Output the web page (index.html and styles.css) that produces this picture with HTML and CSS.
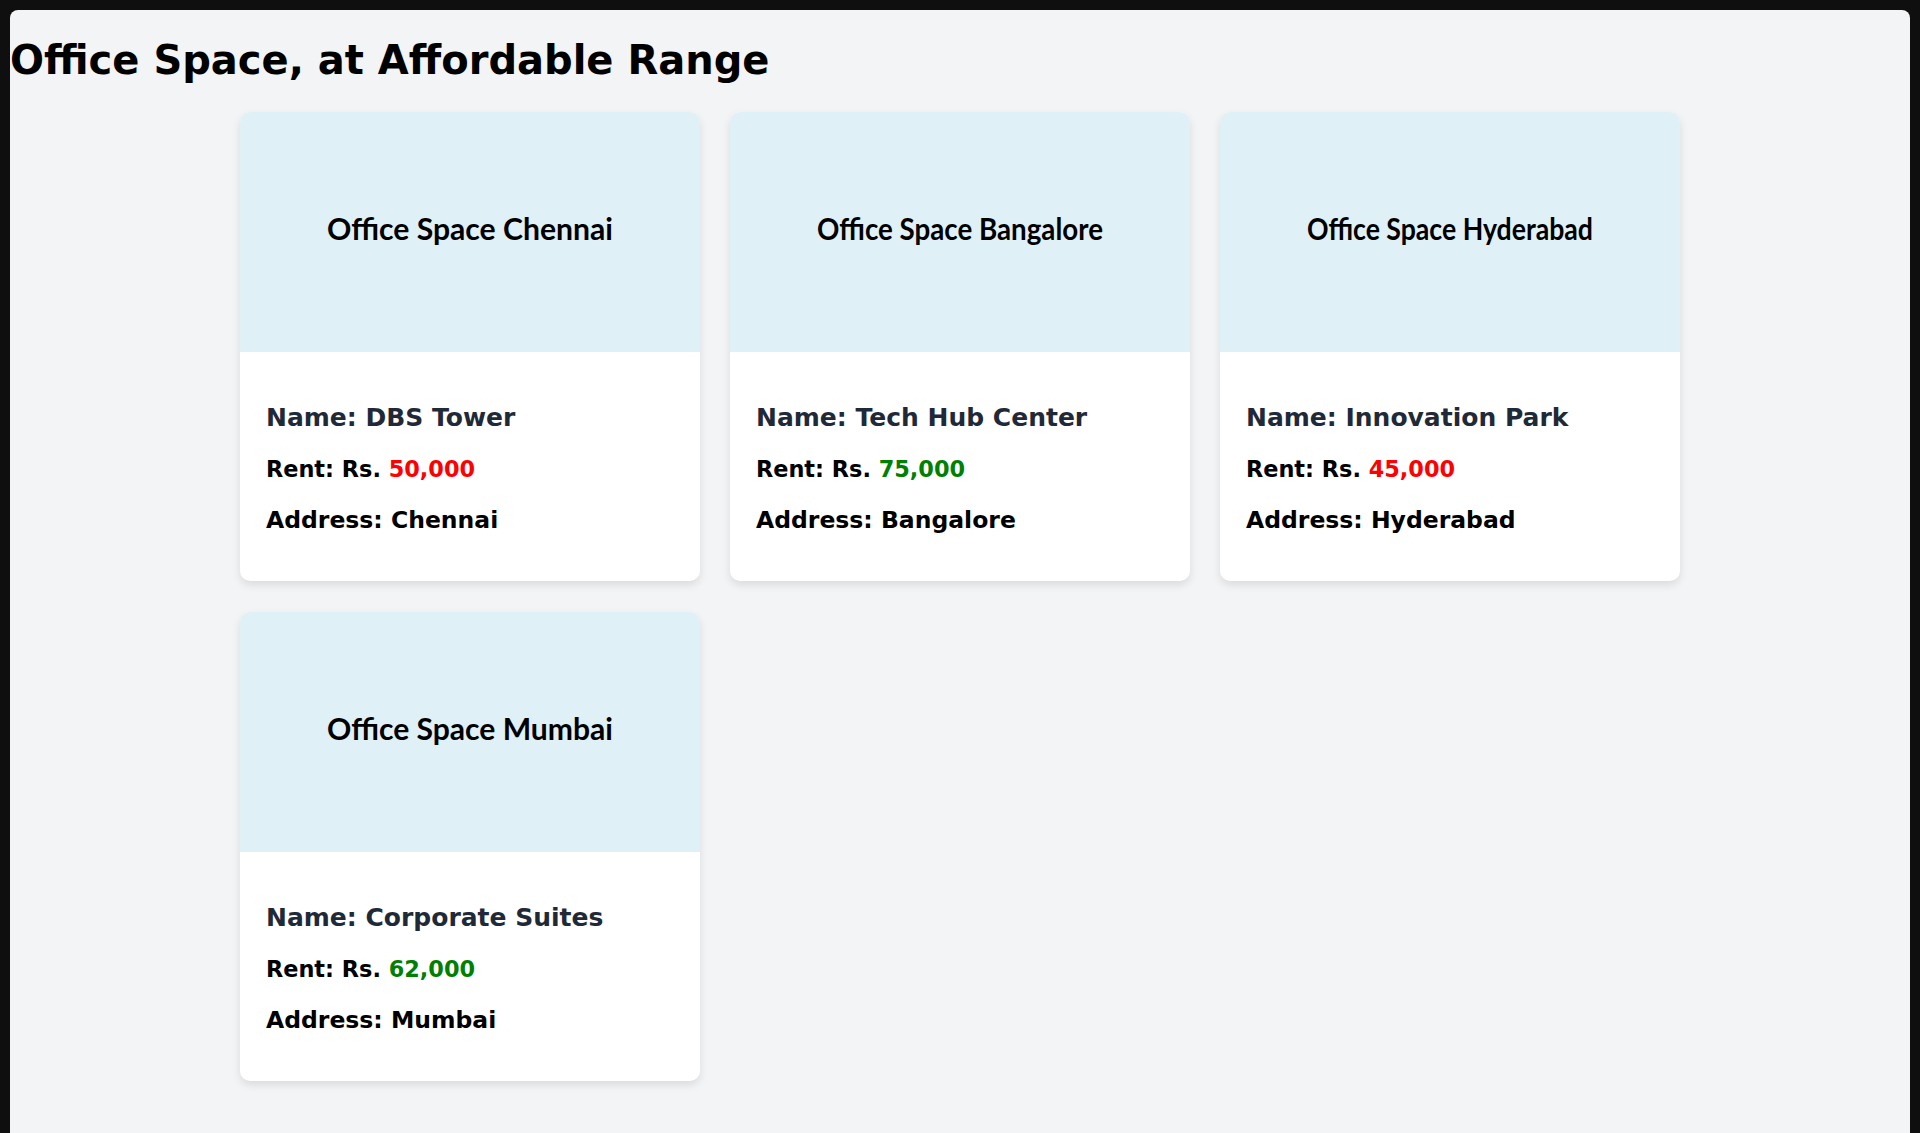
FILE: index.html
```
<!DOCTYPE html>
<html lang="en">
<head>
<meta charset="utf-8">
<title>Office Space</title>
<link rel="stylesheet" href="styles.css">
</head>
<body>
<div class="app">
  <h1 class="title">Office Space, at Affordable Range</h1>
  <div class="grid">
    <div class="card">
      <svg class="card-img" width="460" height="240" viewBox="0 0 460 240"><rect width="460" height="240" class="img-bg"/><text x="230" y="128" text-anchor="middle" textLength="286" lengthAdjust="spacingAndGlyphs" class="img-text">Office Space Chennai</text></svg>
      <div class="card-body">
        <h2 class="name">Name: DBS Tower</h2>
        <p class="rent">Rent: Rs. <span class="high">50,000</span></p>
        <p class="address">Address: Chennai</p>
      </div>
    </div>
    <div class="card">
      <svg class="card-img" width="460" height="240" viewBox="0 0 460 240"><rect width="460" height="240" class="img-bg"/><text x="230" y="128" text-anchor="middle" textLength="286" lengthAdjust="spacingAndGlyphs" class="img-text">Office Space Bangalore</text></svg>
      <div class="card-body">
        <h2 class="name">Name: Tech Hub Center</h2>
        <p class="rent">Rent: Rs. <span class="low">75,000</span></p>
        <p class="address">Address: Bangalore</p>
      </div>
    </div>
    <div class="card">
      <svg class="card-img" width="460" height="240" viewBox="0 0 460 240"><rect width="460" height="240" class="img-bg"/><text x="230" y="128" text-anchor="middle" textLength="286" lengthAdjust="spacingAndGlyphs" class="img-text">Office Space Hyderabad</text></svg>
      <div class="card-body">
        <h2 class="name">Name: Innovation Park</h2>
        <p class="rent">Rent: Rs. <span class="high">45,000</span></p>
        <p class="address">Address: Hyderabad</p>
      </div>
    </div>
    <div class="card">
      <svg class="card-img" width="460" height="240" viewBox="0 0 460 240"><rect width="460" height="240" class="img-bg"/><text x="230" y="128" text-anchor="middle" textLength="286" lengthAdjust="spacingAndGlyphs" class="img-text">Office Space Mumbai</text></svg>
      <div class="card-body">
        <h2 class="name">Name: Corporate Suites</h2>
        <p class="rent">Rent: Rs. <span class="low">62,000</span></p>
        <p class="address">Address: Mumbai</p>
      </div>
    </div>
  </div>
</div>
</body>
</html>
```
FILE: styles.css
```
html, body {
  margin: 0;
  padding: 0;
}
body {
  background: #0f0f0f;
  padding: 10px;
  font-family: "DejaVu Sans", sans-serif;
}
.app {
  background: #f3f4f6;
  border-radius: 8px;
  min-height: 1200px;
  padding: 29px 0 40px;
}
.title {
  margin: 0 0 31px;
  font-size: 40px;
  font-weight: bold;
  color: #000;
  line-height: 42px;
}
.grid {
  display: grid;
  grid-template-columns: repeat(3, 460px);
  gap: 31px 30px;
  justify-content: center;
}
.card {
  background: #fff;
  border-radius: 10px;
  overflow: hidden;
  box-shadow: 0 4px 8px rgba(0, 0, 0, 0.1);
  display: flex;
  flex-direction: column;
}
.card-img {
  display: block;
  width: 460px;
  height: 240px;
}
.img-bg {
  fill: #e0f0f7;
}
.img-text {
  font-family: Lato, sans-serif;
  font-weight: bold;
  font-size: 30px;
  fill: #000;
}
.card-body {
  padding: 51px 26px 46px;
  display: flex;
  flex-direction: column;
  gap: 21px;
}
.name {
  margin: 0;
  font-size: 25px;
  line-height: 30px;
  font-weight: bold;
  color: #1f2937;
}
.rent,
.address {
  margin: 0;
  font-size: 22.4px;
  line-height: 30px;
  font-weight: bold;
  color: #000;
}
.address {
  font-size: 23.5px;
}
.high {
  color: #ff0000;
}
.low {
  color: #008000;
}
```
